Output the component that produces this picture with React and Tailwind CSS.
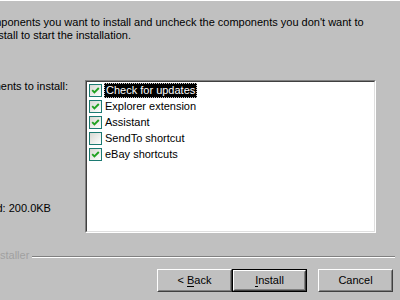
import React from "react";

const components = [
  { name: "Check for updates", checked: true, selected: true },
  { name: "Explorer extension", checked: true },
  { name: "Assistant", checked: true },
  { name: "SendTo shortcut", checked: false },
  { name: "eBay shortcuts", checked: true },
];

function CheckBox({ checked }) {
  return (
    <div className="w-[13px] h-[13px] shrink-0 border border-[#1c7a72] bg-gradient-to-br from-[#d8d8d2] to-white flex items-center justify-center">
      {checked && (
        <svg width="9" height="9" viewBox="0 0 9 9">
          <polyline
            points="1.2,4.2 3.4,6.4 7.8,2"
            fill="none"
            stroke="#21a121"
            strokeWidth="1.9"
          />
        </svg>
      )}
    </div>
  );
}

function Button({ children, isDefault, className = "" }) {
  const face = (
    <div className="h-full border border-t-white border-l-white border-r-[#404040] border-b-[#404040]">
      <div className="h-full border border-t-transparent border-l-transparent border-r-[#808080] border-b-[#808080] flex items-center justify-center">
        {children}
      </div>
    </div>
  );
  return (
    <div className={`w-[75px] h-[23px] ${className}`}>
      {isDefault ? <div className="h-full border border-black">{face}</div> : face}
    </div>
  );
}

export default function App() {
  return (
    <div className="w-[400px] h-[300px] overflow-hidden bg-[#c0c0c0] border-t border-white font-['Liberation_Sans',Arial,sans-serif] text-[11px] leading-[13px] text-black">
      <div className="ml-[-72px] w-[448px] pt-[15px]">
        <p className="whitespace-nowrap">
          Check the components you want to install and uncheck the components you don't want to
          <br />
          install. Click Install to start the installation.
        </p>
        <div className="mt-[38px] flex">
          <div className="w-[157px] flex flex-col justify-between">
            <span>Select components to install:</span>
            <span className="mb-[18px]">Space required: 200.0KB</span>
          </div>
          <div className="w-[291px] h-[153px] border border-t-[#808080] border-l-[#808080] border-r-white border-b-white">
            <div className="h-full border border-t-[#404040] border-l-[#404040] border-r-[#dfdfdf] border-b-[#dfdfdf] bg-white">
              {components.map((c) => (
                <div key={c.name} className="h-[16px] flex items-center pl-[2px]">
                  <CheckBox checked={c.checked} />
                  <span
                    className={
                      c.selected
                        ? "ml-[2px] px-[1px] bg-black text-white border border-dotted border-[#c8c8c8]"
                        : "ml-[3px]"
                    }
                  >
                    {c.name}
                  </span>
                </div>
              ))}
            </div>
          </div>
        </div>
      </div>
      <div className="mt-[16px] flex items-start">
        <span className="ml-[-41px] text-[#a0a0a0] whitespace-nowrap">Setup Installer</span>
        <div className="flex-1 mt-[7px] ml-[3px] mr-[5px] border-t border-t-[#808080] border-b border-b-white" />
      </div>
      <div className="mt-[7px] flex justify-end pr-[7px]">
        <Button>
          &lt; <u className="no-underline border-b border-black leading-[11px] ml-[3px]">B</u>ack
        </Button>
        <Button isDefault>
          <u className="no-underline border-b border-black leading-[11px]">I</u>nstall
        </Button>
        <Button className="ml-[11px]">Cancel</Button>
      </div>
    </div>
  );
}
